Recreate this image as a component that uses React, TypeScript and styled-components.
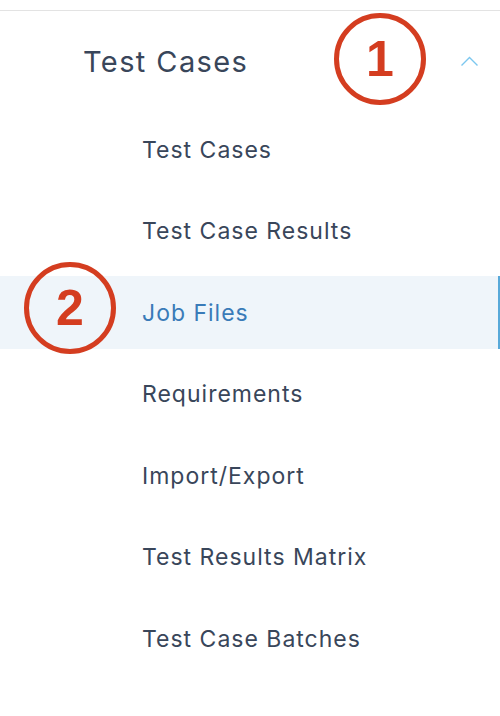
import React from "react";
import styled, { createGlobalStyle } from "styled-components";

const GlobalStyle = createGlobalStyle`
  html, body {
    margin: 0;
    padding: 0;
    background: #ffffff;
  }
  body {
    font-family: Inter, "Noto Sans", sans-serif;
  }
`;

const Page = styled.div`
  position: relative;
  width: 500px;
  height: 716px;
  overflow: hidden;
  background: #ffffff;
  padding-top: 10px;
  box-sizing: border-box;
`;

const Section = styled.div`
  border-top: 1px solid #e3e3e3;
`;

const Header = styled.div`
  display: flex;
  align-items: center;
  justify-content: space-between;
  height: 98px;
  padding: 0 21px 0 83px;
  box-sizing: border-box;
`;

const HeaderTitle = styled.span`
  font-size: 29px;
  color: #39465a;
  letter-spacing: 1.4px;
  margin-top: 2px;
`;

const Caret = styled.svg`
  width: 19px;
  height: 11px;
  margin-top: 2px;
`;

const List = styled.ul`
  list-style: none;
  margin: 0;
  padding: 4px 0 0;
  display: flex;
  flex-direction: column;
  gap: 8.5px;
`;

const Item = styled.li<{ active?: boolean }>`
  display: flex;
  align-items: center;
  height: 73px;
  padding-left: 142px;
  font-size: 23px;
  letter-spacing: 1px;
  color: ${p => (p.active ? "#3a7bb8" : "#39465a")};
  background: ${p => (p.active ? "#eff5fa" : "transparent")};
  border-right: 2px solid ${p => (p.active ? "#58a9d9" : "transparent")};
`;

const Badge = styled.div<{ x: number; y: number }>`
  position: absolute;
  left: ${p => p.x - 46}px;
  top: ${p => p.y - 46}px;
  width: 92px;
  height: 92px;
  border: 5px solid #d43d20;
  border-radius: 50%;
  box-sizing: border-box;
  display: flex;
  align-items: center;
  justify-content: center;
  font-family: "Liberation Sans", Arial, sans-serif;
  font-weight: 700;
  font-size: 50px;
  line-height: 1;
  color: #d43d20;
  background: transparent;
`;

const items = [
  "Test Cases",
  "Test Case Results",
  "Job Files",
  "Requirements",
  "Import/Export",
  "Test Results Matrix",
  "Test Case Batches"
];

export default function App() {
  return (
    <>
      <GlobalStyle />
      <Page>
        <Section>
          <Header>
            <HeaderTitle>Test Cases</HeaderTitle>
            <Caret viewBox="0 0 19 11">
              <path d="M1.5 9.5 L9.5 1.5 L17.5 9.5" fill="none" stroke="#7cc7ef" strokeWidth="1.4" />
            </Caret>
          </Header>
          <List>
            {items.map(label => (
              <Item key={label} active={label === "Job Files"}>
                {label}
              </Item>
            ))}
          </List>
        </Section>
        <Badge x={380} y={59}>1</Badge>
        <Badge x={70} y={308}>2</Badge>
      </Page>
    </>
  );
}
